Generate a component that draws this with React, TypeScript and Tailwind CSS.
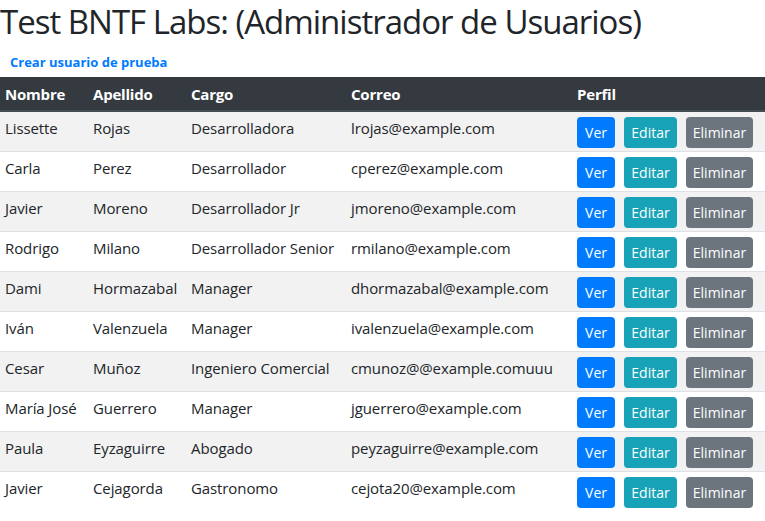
const usuarios = [
  { nombre: "Lissette", apellido: "Rojas", cargo: "Desarrolladora", correo: "lrojas@example.com" },
  { nombre: "Carla", apellido: "Perez", cargo: "Desarrollador", correo: "cperez@example.com" },
  { nombre: "Javier", apellido: "Moreno", cargo: "Desarrollador Jr", correo: "jmoreno@example.com" },
  { nombre: "Rodrigo", apellido: "Milano", cargo: "Desarrollador Senior", correo: "rmilano@example.com" },
  { nombre: "Dami", apellido: "Hormazabal", cargo: "Manager", correo: "dhormazabal@example.com" },
  { nombre: "Iván", apellido: "Valenzuela", cargo: "Manager", correo: "ivalenzuela@example.com" },
  { nombre: "Cesar", apellido: "Muñoz", cargo: "Ingeniero Comercial", correo: "cmunoz@@example.comuuu" },
  { nombre: "María José", apellido: "Guerrero", cargo: "Manager", correo: "jguerrero@example.com" },
  { nombre: "Paula", apellido: "Eyzaguirre", cargo: "Abogado", correo: "peyzaguirre@example.com" },
  { nombre: "Javier", apellido: "Cejagorda", cargo: "Gastronomo", correo: "cejota20@example.com" },
];

export default function App() {
  return (
    <div
      className="w-[765px] bg-white text-[#212529]"
      style={{ fontFamily: '"Open Sans", "Noto Sans", sans-serif' }}
    >
      {/* Title */}
      <h1 className="h-[42px] text-[33px] leading-[44px] font-normal tracking-[-1px] whitespace-nowrap">
        Test BNTF Labs: (Administrador de Usuarios)
      </h1>

      <div className="h-[35px] pl-[10px] pt-[7px]">
        <a href="#" className="text-[13px] font-bold text-[#007bff]">
          Crear usuario de prueba
        </a>
      </div>

      {/* Users table */}
      <table className="w-full border-collapse text-[15px]">
        <thead>
          <tr className="bg-[#343a40] text-white h-[34px] border-b-[2px] border-[#454d55]">
            <th className="w-[88px] pl-[5px] pt-[2px] text-left font-bold tracking-[-0.2px]">Nombre</th>
            <th className="w-[98px] pl-[5px] pt-[2px] text-left font-bold tracking-[-0.2px]">Apellido</th>
            <th className="w-[160px] pl-[5px] pt-[2px] text-left font-bold tracking-[-0.2px]">Cargo</th>
            <th className="w-[226px] pl-[5px] pt-[2px] text-left font-bold tracking-[-0.2px]">Correo</th>
            <th className="pl-[5px] pt-[2px] text-left font-bold tracking-[-0.2px]">Perfil</th>
          </tr>
        </thead>
        <tbody>
          {usuarios.map((u, i) => (
            <tr
              key={i}
              className={`h-[40px] border-t border-[#dee2e6] ${i % 2 === 0 ? "bg-[#f2f2f2]" : "bg-white"}`}
            >
              <td className="pl-[5px] align-top pt-[5px] tracking-[-0.1px] whitespace-nowrap">{u.nombre}</td>
              <td className="pl-[5px] align-top pt-[5px] tracking-[-0.1px] whitespace-nowrap">{u.apellido}</td>
              <td className="pl-[5px] align-top pt-[5px] tracking-[-0.1px] whitespace-nowrap">{u.cargo}</td>
              <td className="pl-[5px] align-top pt-[5px] tracking-[-0.1px] whitespace-nowrap">{u.correo}</td>
              <td className="pl-[5px] align-top pt-[5px]">
                <div className="flex gap-[9px] text-white text-[14px]">
                  <button className="h-[31px] w-[38px] rounded-[4px] bg-[#007bff]">Ver</button>
                  <button className="h-[31px] w-[53px] rounded-[4px] bg-[#17a2b8]">Editar</button>
                  <button className="h-[31px] w-[67px] rounded-[4px] bg-[#6c757d]">Eliminar</button>
                </div>
              </td>
            </tr>
          ))}
        </tbody>
      </table>
    </div>
  );
}
